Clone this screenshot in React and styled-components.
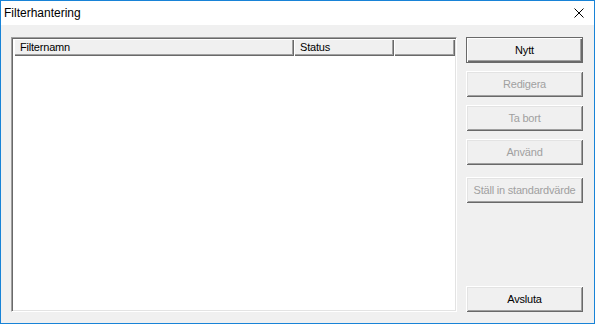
import React from 'react';
import styled, { createGlobalStyle } from 'styled-components';

const GlobalStyle = createGlobalStyle`
  html, body {
    margin: 0;
    padding: 0;
    background: #f0f0f0;
  }
  * { box-sizing: border-box; }
`;

const Window = styled.div`
  width: 595px;
  height: 324px;
  border: 1px solid #1883d7;
  background: #f0f0f0;
  display: flex;
  flex-direction: column;
  font-family: "Liberation Sans", Arial, sans-serif;
`;

const TitleBar = styled.div`
  height: 24px;
  background: #fff;
  display: flex;
  align-items: center;
  justify-content: space-between;
  padding: 0 10px 0 3px;
`;

const Title = styled.span`
  font-size: 12px;
  color: #000;
`;

const Body = styled.div`
  flex: 1;
  display: flex;
  gap: 9px;
  padding: 12px 11px 11px 10px;
`;

const ListBox = styled.div`
  flex: 1;
  background: #fff;
  border-top: 1px solid #a0a0a0;
  border-left: 1px solid #a0a0a0;
  border-bottom: 1px solid #fff;
  border-right: 1px solid #fff;
  box-shadow: inset 1px 1px #696969, inset -1px -1px #e3e3e3;
  padding: 1px;
  display: flex;
  flex-direction: column;
`;

const Header = styled.div`
  display: flex;
  height: 17px;
  margin-left: 1px;
`;

const HeaderCell = styled.div`
  width: ${p => (p.$w ? `${p.$w}px` : 'auto')};
  flex: ${p => (p.$w ? 'none' : 1)};
  background: #f0f0f0;
  box-shadow: inset 1px 1px #fff, inset -1px -1px #696969, inset -2px -2px #a0a0a0;
  font-size: 11px;
  letter-spacing: -0.2px;
  line-height: 16px;
  padding-left: 6px;
  color: #000;
`;

const ButtonColumn = styled.div`
  width: 117px;
  display: flex;
  flex-direction: column;
  gap: 8px;
`;

const Button = styled.button`
  height: 26px;
  width: 100%;
  margin: 0;
  margin-top: ${p => p.$push || 0};
  padding: 0;
  font-family: "Liberation Sans", Arial, sans-serif;
  font-size: 11px;
  letter-spacing: -0.2px;
  background: #f0f0f0;
  color: ${p => (p.disabled ? '#a0a0a0' : '#000')};
  border: ${p => (p.$default ? '1px solid #696969' : 'none')};
  box-shadow: ${p =>
    p.$default
      ? 'inset 1px 1px #fff, inset -1px -1px #696969, inset -2px -2px #a0a0a0'
      : 'inset 1px 1px #fff, inset -1px -1px #696969, inset 2px 2px #e3e3e3, inset -2px -2px #a0a0a0'};
  cursor: default;
  outline: none;
`;

const CloseIcon = () => (
  <svg width="10" height="10" viewBox="0 0 10 10">
    <path d="M0.5 0.5 L9.5 9.5 M9.5 0.5 L0.5 9.5" stroke="#000" strokeWidth="1" fill="none" />
  </svg>
);

export default function App() {
  return (
    <>
      <GlobalStyle />
      <Window>
        <TitleBar>
          <Title>Filterhantering</Title>
          <CloseIcon />
        </TitleBar>
        <Body>
          <ListBox>
            <Header>
              <HeaderCell $w={280}>Filternamn</HeaderCell>
              <HeaderCell $w={100}>Status</HeaderCell>
              <HeaderCell />
            </Header>
          </ListBox>
          <ButtonColumn>
            <Button $default>Nytt</Button>
            <Button disabled>Redigera</Button>
            <Button disabled>Ta bort</Button>
            <Button disabled>Använd</Button>
            <Button disabled $push="4px">Ställ in standardvärde</Button>
            <Button $push="auto">Avsluta</Button>
          </ButtonColumn>
        </Body>
      </Window>
    </>
  );
}
